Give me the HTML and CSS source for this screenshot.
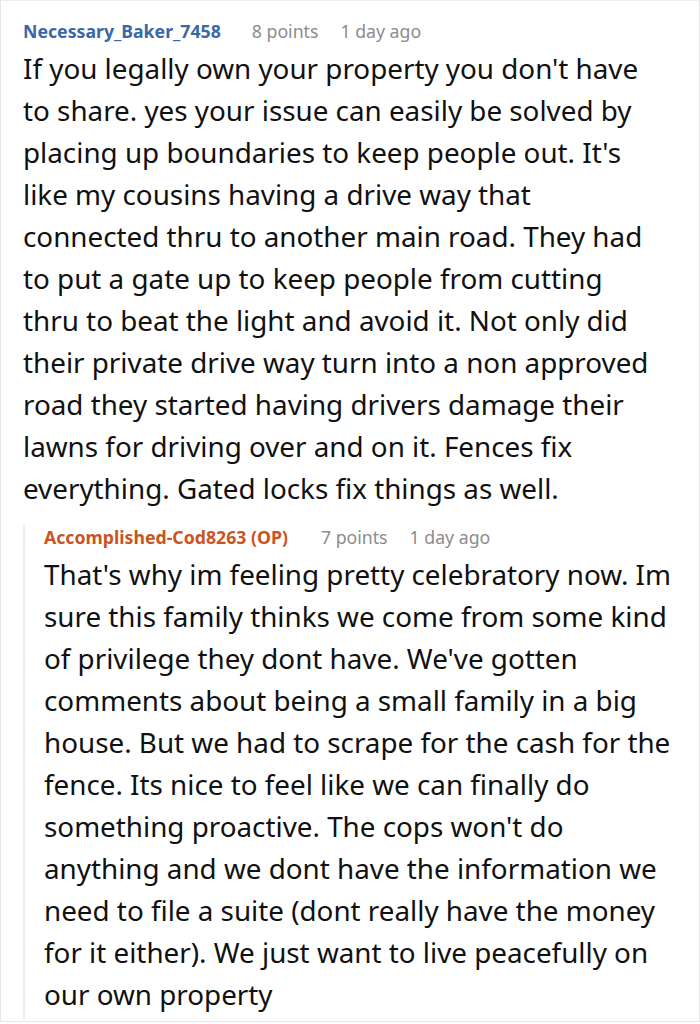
FILE: index.html
```html
<!DOCTYPE html>
<html lang="en">
<head>
<meta charset="utf-8">
<link rel="stylesheet" href="styles.css">
</head>
<body>
<div class="frame">
  <div class="comment">
    <div class="meta">
      <span class="user">Necessary_Baker_7458</span>
      <span class="info">8 points</span>
      <span class="info">1 day ago</span>
    </div>
    <p class="text main-text">If you legally own your property you don't have to share. yes your issue can easily be solved by placing up boundaries to keep people out. It's like my cousins having a drive way that connected thru to another main road. They had to put a gate up to keep people from cutting thru to beat the light and avoid it. Not only did their private drive way turn into a non approved road they started having drivers damage their lawns for driving over and on it. Fences fix everything. Gated locks fix things as well.</p>
    <div class="reply">
      <div class="meta">
        <span class="user op">Accomplished-Cod8263 (OP)</span>
        <span class="info">7 points</span>
        <span class="info">1 day ago</span>
      </div>
      <p class="text">That's why im feeling pretty celebratory now. Im sure this family thinks we come from some kind of privilege they dont have. We've gotten comments about being a small family in a big house. But we had to scrape for the cash for the fence. Its nice to feel like we can finally do something proactive. The cops won't do anything and we dont have the information we need to file a suite (dont really have the money for it either). We just want to live peacefully on our own property</p>
    </div>
  </div>
</div>
</body>
</html>
```

FILE: styles.css
```css
html, body {
  margin: 0;
  padding: 0;
  background: #ffffff;
}
body {
  font-family: "Noto Sans", "Open Sans", sans-serif;
  color: #1a1a1b;
}
.frame {
  width: 700px;
  height: 1022px;
  box-sizing: border-box;
  border: 1px solid #e6e6e6;
  border-top-color: #eeeeee;
}
.comment {
  padding: 18px 20px 0 22px;
}
.meta {
  display: flex;
  align-items: center;
  font-size: 17.7px;
  line-height: 24px;
  height: 24px;
}
.user {
  font-weight: 700;
  color: #3a67a8;
  margin-right: 31px;
}
.user.op {
  color: #c9541f;
  margin-right: 33px;
}
.info {
  color: #8c8c8c;
  margin-right: 22px;
}
.text {
  margin: 4px 0 0 0;
  font-size: 27.8px;
  line-height: 42px;
  color: #111111;
}
.main-text {
  max-width: 631px;
}
.reply {
  margin-top: 16px;
  border-left: 2px solid #ededed;
  padding-left: 19px;
  padding-bottom: 4px;
}
```
